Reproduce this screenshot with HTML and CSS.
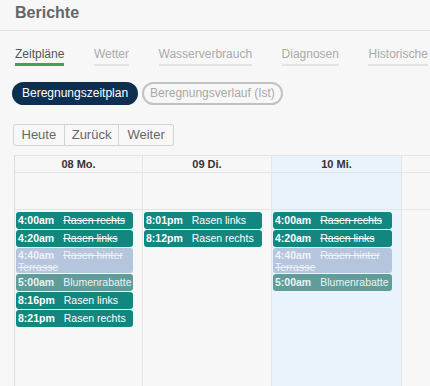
FILE: index.html
```html
<!DOCTYPE html>
<html lang="de">
<head>
<meta charset="utf-8">
<title>Berichte</title>
<link rel="stylesheet" href="styles.css">
</head>
<body>
<div class="page">
  <header class="title-bar"><h1 class="title">Berichte</h1></header>
  <nav class="tabs">
    <span class="tab active">Zeitpläne</span>
    <span class="tab">Wetter</span>
    <span class="tab">Wasserverbrauch</span>
    <span class="tab">Diagnosen</span>
    <span class="tab">Historische</span>
  </nav>
  <div class="pills">
    <span class="pill pill-on">Beregnungszeitplan</span>
    <span class="pill pill-off">Beregnungsverlauf (Ist)</span>
  </div>
  <div class="toolbar">
    <span class="btn">Heute</span><span class="btn">Zurück</span><span class="btn">Weiter</span>
  </div>
  <div class="calendar">
    <div class="day">
      <div class="day-head">08 Mo.</div>
      <div class="day-allday"></div>
      <div class="day-body">
        <div class="ev h17"><b class="t">4:00am</b><span class="n strike">Rasen rechts</span></div>
        <div class="ev h17"><b class="t">4:20am</b><span class="n strike">Rasen links</span></div>
        <div class="ev h23 ev-past"><b class="t">4:40am</b><span class="n strike">Rasen hinter</span> <span class="n strike">Terrasse</span></div>
        <div class="ev h17 ev-dim"><b class="t">5:00am</b><span class="n">Blumenrabatte</span></div>
        <div class="ev h17"><b class="t">8:16pm</b><span class="n">Rasen links</span></div>
        <div class="ev h17"><b class="t">8:21pm</b><span class="n">Rasen rechts</span></div>
      </div>
    </div>
    <div class="day">
      <div class="day-head">09 Di.</div>
      <div class="day-allday"></div>
      <div class="day-body">
        <div class="ev h17"><b class="t">8:01pm</b><span class="n">Rasen links</span></div>
        <div class="ev h17"><b class="t">8:12pm</b><span class="n">Rasen rechts</span></div>
      </div>
    </div>
    <div class="day today">
      <div class="day-head">10 Mi.</div>
      <div class="day-allday"></div>
      <div class="day-body">
        <div class="ev h17"><b class="t">4:00am</b><span class="n strike">Rasen rechts</span></div>
        <div class="ev h17"><b class="t">4:20am</b><span class="n strike">Rasen links</span></div>
        <div class="ev h23 ev-past"><b class="t">4:40am</b><span class="n strike">Rasen hinter</span> <span class="n strike">Terrasse</span></div>
        <div class="ev h17 ev-dim"><b class="t">5:00am</b><span class="n">Blumenrabatte</span></div>
      </div>
    </div>
    <div class="day">
      <div class="day-head">&nbsp;</div>
      <div class="day-allday"></div>
      <div class="day-body"></div>
    </div>
  </div>
</div>
</body>
</html>
```
FILE: styles.css
```css
html, body {
  margin: 0;
  padding: 0;
  background: #f7f7f7;
  overflow: hidden;
  height: 386px;
}
body {
  font-family: "Liberation Sans", Arial, sans-serif;
  color: #555;
}
.page {
  width: 560px;
  height: 386px;
  display: flex;
  flex-direction: column;
}
.title-bar {
  height: 30px;
  border-bottom: 1px solid #e2e2e2;
  display: flex;
  align-items: center;
  padding-left: 15px;
}
.title {
  margin: 0;
  font-size: 16px;
  font-weight: bold;
  color: #666;
  line-height: 18px;
  position: relative;
  top: -2px;
}
.tabs {
  display: flex;
  gap: 29.5px;
  margin-top: 16px;
  padding-left: 15px;
  white-space: nowrap;
}
.tab {
  font-size: 12px;
  line-height: 14px;
  padding-bottom: 2px;
  color: #aaa;
  border-bottom: 2px solid #e3e3e3;
}
.tab.active {
  color: #555;
  border-bottom: 3px solid #3aa35c;
}
.pills {
  display: flex;
  gap: 4px;
  margin-top: 16px;
  padding-left: 12px;
}
.pill {
  font-size: 12px;
  line-height: 15px;
  padding: 2px 8px;
  border-radius: 13px;
  border: 2px solid transparent;
  white-space: nowrap;
}
.pill-on {
  background: #0d3050;
  border-color: #0d3050;
  color: #fff;
}
.pill-off {
  border-color: #c2c2c2;
  color: #a8a8a8;
  padding: 2px 6px;
}
.toolbar {
  display: flex;
  margin-top: 19px;
  padding-left: 13px;
}
.btn {
  font-size: 13px;
  line-height: 20px;
  padding: 0 7px;
  color: #666;
  border: 1px solid #d2d2d2;
  background: #f8f8f8;
}
.btn + .btn {
  border-left: none;
}
.btn:first-child { border-radius: 3px 0 0 3px; padding: 0 7.5px; }
.btn:last-child { border-radius: 0 3px 3px 0; padding: 0 8px; }
.calendar {
  margin-top: 9px;
  margin-left: 14px;
  flex: 1;
  display: grid;
  grid-template-columns: 128px 129px 130px 129px;
  border-left: 1px solid #dcdcdc;
  border-top: 1px solid #e4e4e4;
}
.day {
  display: flex;
  flex-direction: column;
  border-right: 1px solid #e6e6e6;
}
.day.today {
  background: #e8f3fc;
}
.day-head {
  height: 16px;
  line-height: 16px;
  text-align: center;
  font-size: 11px;
  font-weight: bold;
  color: #333;
  border-bottom: 1px solid #e4e4e4;
}
.day-allday {
  height: 36px;
  border-bottom: 1px solid #e6e6e6;
}
.day-body {
  flex: 1;
  display: flex;
  flex-direction: column;
  gap: 1px;
  padding: 2px 9px 0 1px;
}
.ev {
  background: #12877f;
  border-radius: 3px;
  color: #fff;
  font-size: 10.5px;
  line-height: 12px;
  padding: 2px 2px 0 2px;
  overflow: hidden;
  box-sizing: border-box;
}
.h17 { height: 17px; white-space: nowrap; }
.h23 { height: 25px; line-height: 12px; padding-top: 1px; }
.t {
  margin-right: 9px;
}
.strike {
  text-decoration: line-through;
}
.ev-past {
  background: #b6c5de;
  color: #eef2f8;
}
.ev-dim {
  background: #5f9d9a;
  color: #e9f3f2;
}
```
